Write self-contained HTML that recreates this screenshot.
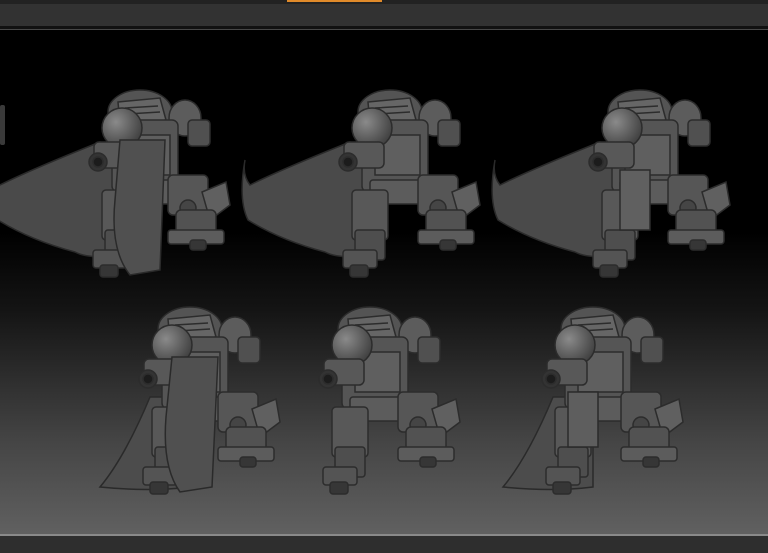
<!DOCTYPE html>
<html><head><meta charset="utf-8"><style>
html,body{margin:0;padding:0;width:768px;height:553px;overflow:hidden;background:#000}
svg{display:block}
</style></head><body>
<svg width="768" height="553" viewBox="0 0 768 553" xmlns="http://www.w3.org/2000/svg">
<defs>
<linearGradient id="bg" x1="0" y1="0" x2="0" y2="1">
<stop offset="0" stop-color="#000"/>
<stop offset="0.42" stop-color="#000"/>
<stop offset="0.56" stop-color="#141414"/>
<stop offset="0.8" stop-color="#454545"/>
<stop offset="1" stop-color="#666"/>
</linearGradient>
<radialGradient id="pad" cx="0.35" cy="0.35" r="0.7">
<stop offset="0" stop-color="#8a8a8a"/><stop offset="1" stop-color="#404040"/>
</radialGradient>
<g id="body" stroke="#2c2c2c" stroke-width="1.5">
<ellipse cx="150" cy="32" rx="32" ry="22" fill="#545454"/>
<path d="M128 22 L170 18 L176 40 L130 44 Z" fill="#666"/>
<path d="M135 28 L168 26 M137 34 L170 32" fill="none"/>
<ellipse cx="195" cy="38" rx="16" ry="18" fill="#5c5c5c"/>
<rect x="198" y="40" width="22" height="26" rx="4" fill="#505050"/>
<rect x="122" y="40" width="66" height="72" rx="6" fill="#555"/>
<rect x="135" y="55" width="45" height="40" fill="#5f5f5f"/>
<circle cx="132" cy="48" r="20" fill="url(#pad)"/>
<rect x="104" y="62" width="40" height="26" rx="5" fill="#585858"/>
<circle cx="108" cy="82" r="9" fill="#333"/>
<circle cx="108" cy="82" r="5" fill="#1c1c1c"/>
<rect x="130" y="100" width="60" height="24" rx="3" fill="#5c5c5c"/>
<rect x="112" y="110" width="36" height="50" rx="4" fill="#585858"/>
<rect x="115" y="150" width="30" height="30" rx="3" fill="#4e4e4e"/>
<rect x="103" y="170" width="34" height="18" rx="3" fill="#545454"/>
<rect x="110" y="185" width="18" height="12" rx="3" fill="#363636"/>
<rect x="178" y="95" width="40" height="40" rx="5" fill="#565656"/>
<path d="M212 112 L236 102 L240 125 L220 140 Z" fill="#606060"/>
<circle cx="198" cy="128" r="8" fill="#454545"/>
<rect x="186" y="130" width="40" height="30" rx="5" fill="#525252"/>
<rect x="178" y="150" width="56" height="14" rx="3" fill="#5c5c5c"/>
<rect x="200" y="160" width="16" height="10" rx="3" fill="#363636"/>
</g>
<path id="cape" d="M5 80 Q2 95 10 105 Q40 90 110 62 L150 70 L140 175 Q100 180 85 172 Q40 160 8 140 Q-2 120 5 80 Z" fill="#4a4a4a" stroke="#2a2a2a" stroke-width="1.5"/>
<path id="capes" d="M110 100 L150 100 L150 190 Q110 195 60 190 Q85 160 110 100 Z" fill="#4c4c4c" stroke="#2a2a2a" stroke-width="1.5"/>
</defs>
<rect x="0" y="0" width="768" height="553" fill="url(#bg)"/>
<rect x="0" y="0" width="768" height="4" fill="#222"/>
<rect x="0" y="4" width="768" height="22" fill="#323232"/>
<rect x="287" y="0" width="95" height="2" fill="#e08a2a"/>
<rect x="0" y="26" width="768" height="3" fill="#111"/>
<rect x="0" y="29" width="768" height="1" fill="#474747"/>
<rect x="0" y="105" width="5" height="40" rx="2" fill="#3a3a3a"/>
<g transform="translate(-10,80)"><use href="#cape"/><use href="#body"/><path d="M130 60 L175 60 L170 190 L140 195 Q120 170 125 120 Z" fill="#505050" stroke="#2a2a2a" stroke-width="1.5"/></g>
<g transform="translate(240,80)"><use href="#cape"/><use href="#body"/></g>
<g transform="translate(490,80)"><use href="#cape"/><use href="#body"/><rect x="130" y="90" width="30" height="60" fill="#606060" stroke="#2a2a2a" stroke-width="1.5"/></g>
<g transform="translate(40,297)"><use href="#capes"/><use href="#body"/><path d="M132 60 L178 60 L172 190 L140 195 Q122 170 126 120 Z" fill="#505050" stroke="#2a2a2a" stroke-width="1.5"/></g>
<g transform="translate(220,297)"><use href="#body"/></g>
<g transform="translate(443,297)"><use href="#capes"/><use href="#body"/><rect x="125" y="95" width="30" height="55" fill="#5e5e5e" stroke="#2a2a2a" stroke-width="1.5"/></g>
<rect x="0" y="534" width="768" height="2" fill="#8a8a8a"/>
<rect x="0" y="536" width="768" height="17" fill="#2e2e2e"/>
</svg>
</body></html>
